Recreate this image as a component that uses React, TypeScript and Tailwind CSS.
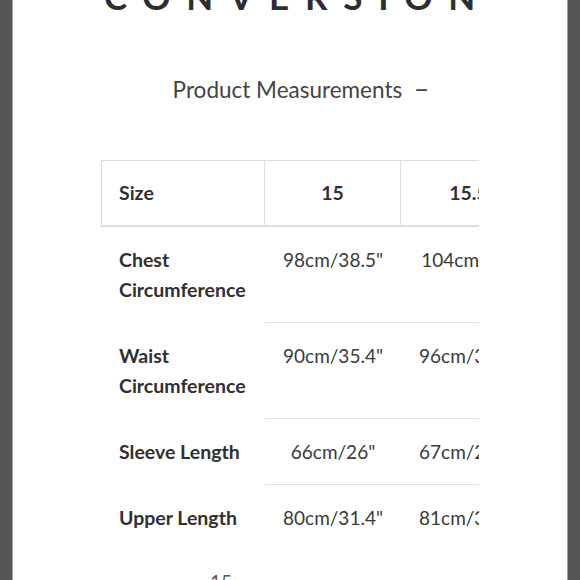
const rows: { label: string[]; values: string[] }[] = [
  { label: ["Chest", "Circumference"], values: ['98cm/38.5"', '104cm/41"'] },
  { label: ["Waist", "Circumference"], values: ['90cm/35.4"', '96cm/37.8"'] },
  { label: ["Sleeve Length"], values: ['66cm/26"', '67cm/26.4"'] },
  { label: ["Upper Length"], values: ['80cm/31.4"', '81cm/31.8"'] },
];

export default function App() {
  return (
    <div className="flex h-[580px] w-[580px] overflow-hidden bg-white font-['Lato','Liberation_Sans',sans-serif]">
      <div className="w-[13px] shrink-0 border-r border-[#a0a0a0] bg-[#555555]" />

      <div className="flex min-w-0 flex-1 flex-col overflow-hidden bg-white">
        {/* brand heading, mostly scrolled off the top */}
        <div className="-mt-[21px] shrink-0 pl-[15px] text-center text-[35px] font-bold leading-none tracking-[0.45em] text-[#2e2e2e]">
          CONVERSION
        </div>

        <div className="mt-[60px] shrink-0 pl-[22px] text-center text-[22.5px] leading-[30px] text-[#444]">
          Product Measurements&nbsp; <span className="text-[27px] leading-none">–</span>
        </div>

        <div className="ml-[88px] mt-[55px] w-[378px] shrink-0 overflow-hidden">
          <div className="w-[436px]">
            {/* header */}
            <div className="flex border-t border-b-2 border-[#dcdcdc] text-[19.5px] font-bold text-[#303030]">
              <div className="flex h-[64px] w-[164px] items-center border-x border-[#dcdcdc] pl-[17px]">
                Size
              </div>
              <div className="flex h-[64px] w-[136px] items-center justify-center border-r border-[#dcdcdc]">
                15
              </div>
              <div className="flex h-[64px] w-[136px] items-center justify-center border-r border-[#dcdcdc]">
                15.5
              </div>
            </div>

            {rows.map((r, i) => (
              <div key={r.label.join(" ")} className="flex leading-[30px]">
                <div className="w-[164px] pb-[18px] pl-[18px] pt-[18px] text-[19.5px] font-bold text-[#303030]">
                  {r.label.map((l) => (
                    <div key={l}>{l}</div>
                  ))}
                </div>
                {r.values.map((v) => (
                  <div
                    key={v}
                    className={`w-[136px] pb-[17px] pt-[18px] text-center text-[19px] text-[#3a3a3a] ${
                      i < rows.length - 1 ? "border-b border-[#e0e0e0]" : "pb-[18px]"
                    }`}
                  >
                    {v}
                  </div>
                ))}
              </div>
            ))}
          </div>
        </div>

        {/* note line, cut off by the bottom of the screenshot */}
        <div className="mt-[16px] shrink-0 pl-[197px] text-[19px] leading-[30px] text-[#555]">15</div>
      </div>

      <div className="w-[13px] shrink-0 border-l border-[#a0a0a0] bg-[#555555]" />
    </div>
  );
}
